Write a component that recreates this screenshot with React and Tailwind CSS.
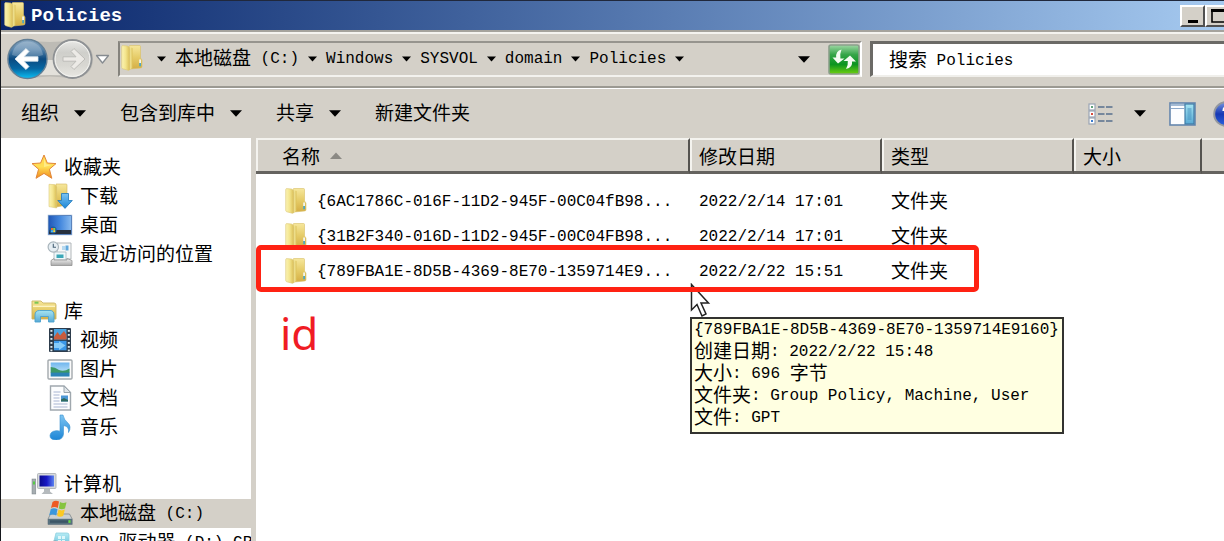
import React from "react";

/* Latin runs are half the width of the Chinese glyphs beside them. */
function Mixed({ children }) {
  const runs = children.match(/[\u4e00-\u9fff]+|[^\u4e00-\u9fff]+/g) || [];
  return (
    <span className="inline-block pb-1 align-middle whitespace-pre">
      {runs.map((run, i) =>
        /[\u4e00-\u9fff]/.test(run) ? (
          <span key={i}>{run}</span>
        ) : (
          <span key={i} className="align-[2px] font-['Liberation_Mono',monospace] text-[16px] leading-none">{run}</span>
        )
      )}
    </span>
  );
}

function Gradient({ id, stops, flat }) {
  return (
    <linearGradient id={id} x1="0" y1="0" x2={flat ? "1" : "0"} y2={flat ? "0" : "1"}>
      {stops.map((c, i) => (
        <stop key={i} offset={i / (stops.length - 1)} stopColor={c} />
      ))}
    </linearGradient>
  );
}

function Gradients() {
  return (
    <svg width="0" height="0" className="absolute" aria-hidden="true">
      <defs>
        <Gradient id="gFront" flat stops={["#fbf4b4", "#f3e48c", "#d9bd55"]} />
        <Gradient id="gMid" flat stops={["#c9aa48", "#f3e695", "#dcc25c"]} />
        <Gradient id="gBack" stops={["#f6e79c", "#e6cc68", "#d4ae45"]} />
        <Gradient id="gBall" stops={["#86a5c0", "#5785ad", "#0b4a80", "#0668a4", "#0cc0f4"]} />
        <Gradient id="gGrey" stops={["#e9e9e7", "#cfcfcb", "#d8d7d2", "#e9e8e3"]} />
        <Gradient id="gGreen" stops={["#9fd8a5", "#35a548", "#0b9420", "#6fd010"]} />
        <Gradient id="gStar" stops={["#ffd34a", "#ffdf55", "#f08a1c"]} />
        <Gradient id="gBlue" stops={["#7cc4f2", "#1d86d6"]} />
        <Gradient id="gDesk" flat stops={["#2259b8", "#4387dd", "#86b8ee"]} />
        <Gradient id="gSilver" stops={["#f4f4f4", "#a9a9a9"]} />
        <Gradient id="gSky" stops={["#6fb6ee", "#d9f1fb"]} />
        <Gradient id="gScreen" flat stops={["#0a0a8c", "#1818c4", "#5b83f0"]} />
        <Gradient id="gPane" stops={["#a5e4f2", "#58a9d4"]} />
        <Gradient id="gDisc" stops={["#b7ecf5", "#4fb4d2"]} />
        <Gradient id="gHelp" stops={["#7795e0", "#1638b4", "#2c62e0"]} />
      </defs>
    </svg>
  );
}

function Folder() {
  return (
    <svg width="22" height="26" viewBox="0 0 22 26" className="mb-[2px] shrink-0" aria-hidden="true">
      <path d="M8 1.5 Q8 .5 9 .5 H18.5 Q19.5 .5 19.5 1.5 V13 L21 15 V21.5 Q21 23 19.5 23 L9 24 Z" fill="url(#gBack)" stroke="#d9bf67" strokeWidth=".6" />
      <path d="M7 2 L11.5 3 V23 L8 25 Z" fill="url(#gMid)" />
      <path d="M.7 1.5 Q.7 .6 1.8 .6 L6.5 1 Q8.8 2 8.8 4 V24.5 Q8.5 25.6 7 25.2 L1.8 23.8 Q.7 23.4 .7 22.3 Z" fill="url(#gFront)" stroke="#dcc878" strokeWidth=".6" />
      <path d="M18.3 14.5 h1.6 v3.5 h-1.6z" fill="#f6fbff" />
      <path d="M18.3 18 h1.6 v3.3 h-1.6z" fill="#3fa6cf" />
    </svg>
  );
}

function Caret({ small }) {
  return small ? (
    <svg width="9" height="6" viewBox="0 0 9 6" className="shrink-0" aria-hidden="true"><path d="M0 .5H9L4.5 5.5Z" /></svg>
  ) : (
    <svg width="12" height="7" viewBox="0 0 12 7" className="shrink-0" aria-hidden="true"><path d="M0 .3H12L6 6.8Z" /></svg>
  );
}

function SideIcon({ children }) {
  return (
    <svg width="26" height="26" viewBox="0 0 26 26" className="mb-[2px] shrink-0" aria-hidden="true">{children}</svg>
  );
}

const ICONS = {
  star: (
    <SideIcon>
      <path d="M13 1 L16.3 9 L25 9.6 L18.4 15.2 L20.8 24.3 L13 19.4 L5 24.3 L7.6 15.2 L1 9.6 L9.6 9 Z" fill="url(#gStar)" stroke="#e2873a" strokeWidth="1" strokeLinejoin="round" />
      <path d="M13 4 L15.2 10.2 L21 11 L13 13 Z" fill="#fff1a0" opacity=".7" />
    </SideIcon>
  ),
  download: (
    <SideIcon>
      <path d="M9 1 H19 Q20 1 20 2 V22 L9 24Z" fill="url(#gBack)" stroke="#d3b75c" strokeWidth=".6" />
      <path d="M2 1.3 L7.5 1.6 Q9.6 2.4 9.6 4.3 V25 L2 23.6Z" fill="url(#gFront)" stroke="#dcc878" strokeWidth=".6" />
      <path d="M14.5 10.5 H21.5 V17.5 H25.3 L18 25.4 L10.8 17.5 H14.5Z" fill="url(#gBlue)" stroke="#1d77bd" strokeWidth=".8" />
    </SideIcon>
  ),
  desktop: (
    <SideIcon>
      <rect x="1" y="3" width="24" height="20" fill="#3669ae" stroke="#b4c6df" strokeWidth=".6" />
      <rect x="2" y="4" width="22" height="14" fill="url(#gDesk)" />
      <path d="M2 18 H24 V22 H2Z" fill="#26303e" />
      <circle cx="6" cy="18" r="3.6" fill="#1c5c9e" />
      <path d="M4 16h2v2H4z" fill="#f16733" /><path d="M6.2 16h2v2h-2z" fill="#8cd440" />
      <path d="M4 18.2h2v2H4z" fill="#49b4f3" /><path d="M6.2 18.2h2v2h-2z" fill="#ffda39" />
    </SideIcon>
  ),
  recent: (
    <SideIcon>
      <path d="M10 2 H24 V18 H10Z" fill="#f5f7f8" stroke="#b2b7ba" />
      <path d="M15 5h3v4h-3z" fill="#b7d9ef" /><path d="M18.5 4.5h3v5h-3z" fill="#60a8dc" />
      <path d="M7 11 H19 V19 H7Z" fill="#eef7fa" stroke="#a8b6bd" strokeWidth=".8" />
      <path d="M9.5 13.5h7v3.5h-7z" fill="#3ba7b7" />
      <path d="M4 19.5 L7 17.5 V19 H20 V17.5 L25 19.5 V24.5 H4Z" fill="url(#gSilver)" stroke="#929292" strokeWidth=".8" />
      <circle cx="6.3" cy="6" r="5.2" fill="#e6eef3" stroke="#a9b5bc" strokeWidth="1.2" />
      <path d="M6.3 2.7V6.3H9" fill="none" stroke="#4a6478" strokeWidth="1.1" />
    </SideIcon>
  ),
  library: (
    <SideIcon>
      <path d="M1 3 H10 L12 5 H23 Q25 5 25 7 V21 H1Z" fill="url(#gBack)" stroke="#cdb664" strokeWidth=".9" />
      <path d="M3.5 4.7h4" stroke="#7cc653" strokeWidth="2" />
      <path d="M2 8.3 H24" stroke="#fff6c6" strokeWidth="1.3" />
      <path d="M4 24 V17 Q4 12.5 8.5 12.5 H19 Q23 12.5 23 17 V24 H17.5 V18.5 H9.5 V24Z" fill="url(#gPane)" stroke="#4ba2cf" strokeWidth=".9" />
    </SideIcon>
  ),
  video: (
    <SideIcon>
      <rect x="2" y="1" width="22" height="24" rx="1" fill="#2d3c4c" />
      <rect x="7" y="2" width="12.5" height="10.5" fill="#4aa3e0" />
      <path d="M7 10 L10.5 5 L13 8.5 L17 4 L19.5 8 V12.5 H7Z" fill="#c85c3d" />
      <rect x="7" y="13.8" width="12.5" height="9.5" fill="#3a97e8" />
      <path d="M7 16H12V14.3L18.5 18.4L12 23V21H7Z" fill="#86ccfa" />
      {[3, 7, 11, 15, 19, 22.5].map((y) => (
        <g key={y} fill="#dce9ee"><rect x="3.4" y={y} width="2" height="1.8" /><rect x="20.8" y={y} width="2" height="1.8" /></g>
      ))}
    </SideIcon>
  ),
  picture: (
    <SideIcon>
      <rect x="1" y="4" width="24" height="19" rx="1" fill="#fafafa" stroke="#a3a9ad" strokeWidth="1.4" />
      <rect x="3.7" y="6.5" width="18.8" height="14" fill="url(#gSky)" />
      <path d="M3.7 11 Q8 11 12 14 Q17 16 22.5 12.5 V17 H3.7Z" fill="#3c9867" />
      <path d="M3.7 16.6 H22.5 V20.5 H3.7Z" fill="#2c83b5" />
    </SideIcon>
  ),
  document: (
    <SideIcon>
      <path d="M3.5 1 H17 L23.5 7.5 V25 H3.5Z" fill="#fcfdfe" stroke="#a0a8ae" strokeWidth="1.4" />
      <path d="M17 1 V7.5 H23.5Z" fill="#dfe5e9" stroke="#9aa4ac" />
      <path d="M6.5 7h7M6.5 10h6M6.5 13h6M6.5 16h6M6.5 19h14M6.5 22h14" stroke="#a7b5d2" strokeWidth="1.1" />
      <rect x="14" y="10.5" width="7" height="6" fill="#4c97d6" /><path d="M14 14.5 L17 13 L21 15 V16.5 H14Z" fill="#2f6b60" />
    </SideIcon>
  ),
  music: (
    <SideIcon>
      <path d="M13 1 H16 Q17 6 20.5 8.5 Q25 12.5 21.5 18.5 Q22.5 12.5 16.5 11.5 V20 Q16 25.6 9.5 26 Q3 26 3 21.7 Q3.3 17.4 9 16.7 Q11.5 16.5 13 17.2Z" fill="url(#gBlue)" stroke="#3b92d0" strokeWidth=".6" />
    </SideIcon>
  ),
  computer: (
    <SideIcon>
      <rect x="6.5" y="2.5" width="18.5" height="15" rx="1" fill="#d7dadc" stroke="#a6abb0" strokeWidth=".8" />
      <rect x="8.5" y="4.5" width="14.5" height="11" fill="url(#gScreen)" />
      <path d="M13 17.5 H19 V20.5 L22 23 H10.5 L13 20.5Z" fill="#b5babd" />
      <rect x="1" y="8" width="3.8" height="15" fill="#a6adb1" stroke="#7a8287" strokeWidth=".5" />
      <path d="M2 10.5h2v3H2z" fill="#55cc44" />
    </SideIcon>
  ),
  drive: (
    <SideIcon>
      <path d="M3.5 14 H22.5 L25.2 19 V24.5 H1 V19Z" fill="#cbd0d2" stroke="#7d868c" strokeWidth=".8" />
      <path d="M1 18.8 H25.2 V24.5 H1Z" fill="#58717e" />
      <path d="M3 20.3H21V22.8H3z" fill="#3c5666" /><path d="M21.5 20.2h2v2.7h-2z" fill="#63e03c" />
      <path d="M5.5 2 Q8.5 -.5 12 1.6 L10.8 8 Q7.5 6.2 4 8Z" fill="#ee5a24" />
      <path d="M13 2 Q16 3.7 19.5 2.2 L18 8.4 Q14.7 10 11.8 8.4Z" fill="#86c440" />
      <path d="M3.8 9 Q7 7.2 10.5 9.2 L9.2 15.6 Q6 13.5 2.2 15.3Z" fill="#3997dd" />
      <path d="M11.5 9.6 Q14.5 11.2 17.8 9.6 L16.2 16 Q13 17.6 10.2 16Z" fill="#fbc924" />
    </SideIcon>
  ),
  dvd: (
    <SideIcon>
      <path d="M9 4 H20 Q22 4 22 6 V20 H5Z" fill="url(#gDisc)" stroke="#8dd0df" strokeWidth=".8" />
      <path d="M11 7h3v3h-3zM15 7h3v3h-3zM11 11h3v3h-3zM15 11h3v3h-3z" fill="#dff7fa" />
      <ellipse cx="8" cy="18" rx="6" ry="6" fill="#c4d2d6" stroke="#82949b" />
    </SideIcon>
  ),
};

const GROUPS = [
  { label: "收藏夹", icon: "star", items: [["下载", "download"], ["桌面", "desktop"], ["最近访问的位置", "recent"]] },
  { label: "库", icon: "library", items: [["视频", "video"], ["图片", "picture"], ["文档", "document"], ["音乐", "music"]] },
  { label: "计算机", icon: "computer", items: [["本地磁盘 (C:)", "drive"], ["DVD 驱动器 (D:) GR", "dvd"]] },
];

const ROWS = [
  ["{6AC1786C-016F-11D2-945F-00C04fB98...", "2022/2/14 17:01", "文件夹"],
  ["{31B2F340-016D-11D2-945F-00C04FB98...", "2022/2/14 17:01", "文件夹"],
  ["{789FBA1E-8D5B-4369-8E70-1359714E9...", "2022/2/22 15:51", "文件夹"],
];

const CRUMBS = ["本地磁盘 (C:)", "Windows", "SYSVOL", "domain", "Policies"];

const TIP = [
  "{789FBA1E-8D5B-4369-8E70-1359714E9160}",
  "创建日期: 2022/2/22 15:48",
  "大小: 696 字节",
  "文件夹: Group Policy, Machine, User",
  "文件: GPT",
];

const CAPTION = "flex h-[22px] w-[25px] items-center justify-center border-2 border-t-white border-l-white border-r-[#505050] border-b-[#505050] bg-[#d4d0c8]";

function TitleBar() {
  return (
    <header className="flex h-[30px] shrink-0 items-center overflow-hidden border-t border-[#20283c] bg-linear-to-r from-[#0a246a] to-[#a6caf0] pl-[3px]">
      <Folder />
      <h1 className="ml-[5px] font-['Liberation_Mono',monospace] text-[19px] font-bold text-white">Policies</h1>
      <div className="-mr-[6px] ml-auto flex">
        <button type="button" aria-label="最小化" className={CAPTION}>
          <svg width="18" height="16" viewBox="0 0 18 16"><path d="M4 12h10v3H4z" /></svg>
        </button>
        <button type="button" aria-label="最大化" className={CAPTION}>
          <svg width="18" height="16" viewBox="0 0 18 16"><path d="M3 3h13v11H3z" fill="none" stroke="#000" strokeWidth="1.6" /><path d="M2 1h15v3H2z" /></svg>
        </button>
      </div>
    </header>
  );
}

function NavButtons() {
  return (
    <div className="relative flex shrink-0 items-center">
      <svg width="86" height="42" viewBox="0 0 86 42" className="absolute" aria-hidden="true">
        <path d="M20 2 Q43 6 66 2 Q86 4 86 21 Q86 38 66 41 Q43 36 20 41 Q0 38 0 21 Q0 4 20 2Z" fill="#bdbbb5" />
        <path d="M20 22 H66 V38 Q43 36 20 38Z" fill="#e3e1db" />
      </svg>
      <button type="button" aria-label="后退" className="relative">
        <svg width="42" height="42" viewBox="0 0 42 42">
          <circle cx="20.5" cy="21" r="19.5" fill="url(#gBall)" stroke="#627f96" strokeWidth="1.4" />
          <path d="M5 17 Q7 4 20.5 3.5 Q34 4 36 17 Q21 23 5 17Z" fill="#fff" opacity=".22" />
          <path d="M8 21 L19 10.5 L22 13.5 L17 18.8 H31 V23.2 H17 L22 28.5 L19 31.5Z" fill="#fff" stroke="#dbe7ef" strokeWidth=".8" />
        </svg>
      </button>
      <button type="button" aria-label="前进" className="relative ml-[3px]">
        <svg width="42" height="42" viewBox="0 0 42 42">
          <circle cx="20.5" cy="21" r="19" fill="url(#gGrey)" stroke="#8e9194" strokeWidth="1.8" />
          <circle cx="20.5" cy="21" r="17.4" fill="none" stroke="#f4f4f1" strokeWidth="1" />
          <path d="M33 21 L22 10.5 L19 13.5 L24 18.8 H11 V23.2 H24 L19 28.5 L22 31.5Z" fill="#eceae6" stroke="#bdbcb8" strokeWidth="1" />
        </svg>
      </button>
      <button type="button" aria-label="最近的页面" className="relative ml-[1px]">
        <svg width="15" height="11" viewBox="0 0 15 11"><path d="M1.5 1.5H13.5L7.5 9Z" fill="#fff" stroke="#868b90" strokeWidth="1.3" strokeLinejoin="round" /></svg>
      </button>
    </div>
  );
}

function NavBar() {
  return (
    <nav className="flex h-[58px] shrink-0 items-center border-t-2 border-b-2 border-t-[#a5a39d] border-b-[#9b9992] pl-[6px] shadow-[inset_0_2px_0_#f4f3ef]">
      <NavButtons />
      <div className="ml-[8px] flex h-[36px] min-w-0 flex-1 items-center border-2 border-t-[#96948e] border-l-[#85837d] border-r-white border-b-[#f3f2ee] pl-[1px]">
        <Folder />
        <ol className="ml-[14px] flex items-center gap-[9px] leading-[26px]">
          <li className="flex items-center"><Caret small /></li>
          {CRUMBS.map((c) => (
            <li key={c} className="flex items-center gap-[9px]">
              <a href="#" className="flex whitespace-nowrap"><Mixed>{c}</Mixed></a>
              <Caret small />
            </li>
          ))}
        </ol>
        <button type="button" aria-label="以前的位置" className="ml-auto"><Caret /></button>
        <button type="button" aria-label="刷新" className="ml-[18px]">
          <svg width="32" height="31" viewBox="0 0 32 31">
            <rect x="1" y="1" width="30" height="29" rx="2" fill="url(#gGreen)" stroke="#8a9e8b" strokeWidth="1.6" />
            <path d="M13.5 5.5 Q7.5 7 8.2 13.5 H4.5 L10 19.5 L16.5 14.5 H12.4 Q11.8 9.5 13.500 5.500Z" fill="#f4fbf2" />
            <path d="M18 25 Q25 23.500 24 17.500 H28 L22 11.500 L15.500 17 H19.800 Q20.300 21.500 18 25Z" fill="#f4fbf2" />
          </svg>
        </button>
      </div>
      <label className="ml-[8px] flex h-[36px] w-[354px] shrink-0 items-center border-t-3 border-b-2 border-l-3 border-[#6b6a66] border-b-[#f0efeb] bg-white pt-[2px] pl-[16px]">
        <Mixed>搜索 Policies</Mixed>
        <input type="search" className="ml-2 min-w-0 flex-1 bg-transparent outline-none" />
      </label>
    </nav>
  );
}

function ToolBar() {
  return (
    <div className="flex h-[50px] shrink-0 items-center overflow-hidden border-t border-white pl-[20px]">
      <div className="flex items-center gap-[34px]">
        {["组织", "包含到库中", "共享"].map((t) => (
          <button key={t} type="button" className="flex items-center gap-[15px]"><Mixed>{t}</Mixed><Caret /></button>
        ))}
        <button type="button"><Mixed>新建文件夹</Mixed></button>
      </div>
      <div className="-mr-[15px] ml-auto flex items-center">
        <button type="button" aria-label="更改视图">
          <svg width="26" height="22" viewBox="0 0 26 22">
            {[["#5fa27c", 1], ["#d94a3a", 8], ["#3c7cd0", 15]].map(([c, y]) => (
              <g key={y}>
                <rect x="1" y={y} width="6" height="6" fill="#fff" stroke="#9aa5b5" strokeWidth="1.2" />
                <path d={`M3 ${y + 2}h2v2h-2z`} fill={c} />
                <path d={`M10 ${y + 3}h6.500M18 ${y + 3}h6.500`} stroke="#76879c" strokeWidth="2" />
              </g>
            ))}
          </svg>
        </button>
        <button type="button" aria-label="更多视图" className="ml-[20px]"><Caret /></button>
        <button type="button" aria-label="预览窗格" className="ml-[23px]">
          <svg width="27" height="24" viewBox="0 0 27 24">
            <rect x="1" y="1" width="25" height="22" fill="#fcfdff" stroke="#6486ae" strokeWidth="1.6" />
            <path d="M2 3h23" stroke="#8da9ca" strokeWidth="1.6" /><path d="M2 6.500h13" stroke="#8da9ca" />
            <rect x="16" y="2" width="9" height="20" fill="url(#gPane)" stroke="#3f7ba6" strokeWidth="1.2" />
            <path d="M18.500 6h4v12h-4z" fill="#4793bf" opacity=".5" />
          </svg>
        </button>
        <button type="button" aria-label="帮助" className="ml-[17px]">
          <svg width="26" height="26" viewBox="0 0 26 26">
            <circle cx="13" cy="13" r="11.800" fill="url(#gHelp)" stroke="#92969f" strokeWidth="2" />
            <path d="M10.500 10q0-4 3.500-4t3.500 3.500q0 2-3.500 4v2" fill="none" stroke="#fff" strokeWidth="2.200" />
            <circle cx="14" cy="19" r="1.400" fill="#fff" />
          </svg>
        </button>
      </div>
    </div>
  );
}

function Sidebar() {
  return (
    <aside className="flex w-[250px] shrink-0 flex-col gap-[28px] overflow-hidden bg-white pt-[15px]">
      {GROUPS.map((g) => (
        <section key={g.label} className="shrink-0">
          <h2 className="flex h-[29px] items-center gap-[7px] pl-[30px]">{ICONS[g.icon]}<Mixed>{g.label}</Mixed></h2>
          <ul>
            {g.items.map(([label, icon]) => (
              <li key={label}>
                <a href="#" className={`flex h-[29px] items-center gap-[7px] pl-[46px] ${icon === "drive" ? "bg-[#d4d0c8]" : ""}`}>
                  {ICONS[icon]}<Mixed>{label}</Mixed>
                </a>
              </li>
            ))}
          </ul>
        </section>
      ))}
    </aside>
  );
}

const TH = "h-[36px] border-t-2 border-r-2 border-b-3 border-t-[#f4f3ef] border-r-[#55534f] border-b-[#65635f] p-0 pl-[9px] text-left font-normal shadow-[inset_2px_0_0_#f4f3ef]";

function FileList() {
  return (
    <main className="relative min-w-0 flex-1 overflow-hidden bg-white">
      <table className="w-full table-fixed border-separate border-spacing-0">
        <colgroup>
          <col className="w-[434px]" /><col className="w-[192px]" /><col className="w-[192px]" /><col className="w-[128px]" /><col />
        </colgroup>
        <thead className="bg-[#d4d0c8]">
          <tr>
            <th className={TH}>
              <span className="flex items-center gap-[10px] pl-[17px]">
                名称
                <svg width="12" height="7" viewBox="0 0 12 7" aria-hidden="true"><path d="M0 7H12L6 .5Z" fill="#8b8984" /></svg>
              </span>
            </th>
            <th className={TH}>修改日期</th>
            <th className={TH}>类型</th>
            <th className={TH}>大小</th>
            <td className="border-t-2 border-b-3 border-t-[#f4f3ef] border-b-[#65635f]" />
          </tr>
        </thead>
        <tbody className="before:block before:h-[10px]">
          {ROWS.map(([name, date, type]) => (
            <tr key={name} className="h-[35px]">
              <td className="p-0 pl-[29px]">
                <span className="flex items-center gap-[10px]"><Folder /><Mixed>{name}</Mixed></span>
              </td>
              <td className="p-0 pl-[9px]"><span className="flex"><Mixed>{date}</Mixed></span></td>
              <td className="p-0 pl-[9px]"><span className="flex"><Mixed>{type}</Mixed></span></td>
            </tr>
          ))}
        </tbody>
      </table>

      <p className="pt-[16px] pl-[24px] font-['Noto_Sans',sans-serif] text-[44px] leading-[56px] text-[#f01c24]">id</p>

      <svg width="22" height="36" viewBox="0 0 22 36" className="absolute top-[145px] left-[434px]" aria-hidden="true">
        <path d="M1.500 1.500 V27 L7 21.500 L12 33 L16 31 L11 20 H18.500 Z" fill="#fff" stroke="#222" strokeWidth="1.500" />
      </svg>
      <div className="absolute top-[107px] left-0 h-[47px] w-[723px] rounded-[5px] border-5 border-[#ff2213]" />
      <div role="tooltip" className="absolute top-[179px] left-[434px] w-[374px] border-2 border-[#333330] bg-[#ffffe1] px-[2px] pt-[2px] pb-px leading-[22px]">
        {TIP.map((line) => (
          <p key={line} className="flex h-[22px] items-end"><Mixed>{line}</Mixed></p>
        ))}
      </div>
    </main>
  );
}

export default function App() {
  return (
    <div className="flex h-screen flex-col overflow-hidden border-l border-[#15171c] bg-[#d4d0c8] font-['Noto_Sans_CJK_SC',sans-serif] text-[19px] leading-[28px] text-black">
      <Gradients />
      <TitleBar />
      <NavBar />
      <ToolBar />
      <div className="flex min-h-0 flex-1">
        <Sidebar />
        <div className="w-[5px] shrink-0" />
        <FileList />
      </div>
    </div>
  );
}
